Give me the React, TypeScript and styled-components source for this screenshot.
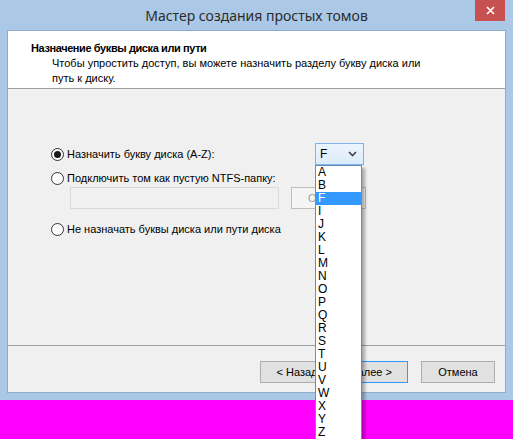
import styled, { createGlobalStyle } from "styled-components";

const GlobalStyle = createGlobalStyle`
    html, body {
        margin: 0;
        padding: 0;
        background: #ff00ff;
    }
    body {
        font-family: "Liberation Sans", Arial, sans-serif;
        font-size: 11px;
        color: #000;
    }
`;

const letters = ["A", "B", "F", "I", "J", "K", "L", "M", "N", "O", "P", "Q", "R", "S", "T", "U", "V", "W", "X", "Y", "Z"];

const Page = styled.div`
    width: 513px;
    height: 439px;
    background: #ff00ff;
`;

const Window = styled.div`
    width: 513px;
    height: 400px;
    box-sizing: border-box;
    padding: 0 7px 7px;
    background: #abc9e7;
    display: flex;
    flex-direction: column;
`;

const TitleBar = styled.div`
    height: 30px;
    display: grid;
    grid-template-columns: 1fr auto 1fr;
    align-items: center;
`;

const Title = styled.div`
    grid-column: 2;
    font-family: "Noto Sans", sans-serif;
    font-size: 14px;
    color: #2c2c2c;
    padding-top: 1px;
`;

const CloseButton = styled.div`
    grid-column: 3;
    justify-self: end;
    align-self: start;
    width: 30px;
    height: 21px;
    margin-right: 1px;
    background: #c75050;
    display: flex;
    align-items: center;
    justify-content: center;
`;

const Client = styled.div`
    flex: 1;
    border: 1px solid #8eaccd;
    background: #f0f0f0;
    display: flex;
    flex-direction: column;
`;

const Header = styled.div`
    height: 58px;
    box-sizing: border-box;
    background: #fff;
    border-bottom: 1px solid #a0a0a0;
    padding: 10px 0 0 23px;
    line-height: 15px;
`;

const HeaderTitle = styled.div`
    font-weight: bold;
    letter-spacing: -0.4px;
`;

const HeaderText = styled.div`
    margin-left: 21px;
`;

const Body = styled.div`
    flex: 1;
    display: flex;
    flex-direction: column;
`;

const Options = styled.div`
    flex: 1;
    padding: 54px 0 0 43px;
    display: flex;
    flex-direction: column;
`;

const Row = styled.div<{ $gap?: number }>`
    display: flex;
    align-items: center;
    margin-top: ${(p) => p.$gap ?? 0}px;
`;

const RadioLabel = styled.label<{ $width?: number }>`
    display: flex;
    align-items: center;
    gap: 3px;
    line-height: 14px;
    width: ${(p) => (p.$width ? `${p.$width}px` : "auto")};
`;

const RadioCircle = styled.span<{ $checked?: boolean }>`
    width: 11px;
    height: 11px;
    border: 1px solid #333;
    border-radius: 50%;
    background: #fff;
    display: flex;
    align-items: center;
    justify-content: center;
    &::after {
        content: "";
        display: ${(p) => (p.$checked ? "block" : "none")};
        width: 7px;
        height: 7px;
        border-radius: 50%;
        background: #1a1a1a;
    }
`;

const PathRow = styled.div`
    display: flex;
    gap: 12px;
    margin: 2px 0 0 19px;
`;

const TextBox = styled.div`
    width: 207px;
    height: 20px;
    border: 1px solid #d9d9d9;
    background: #f0f0f0;
`;

const DisabledButton = styled.div`
    width: 73px;
    height: 20px;
    border: 1px solid #bfbfbf;
    background: #f4f4f4;
    color: #a0a0a0;
    display: flex;
    align-items: center;
    justify-content: center;
`;

const ComboWrap = styled.div`
    position: relative;
`;

const Combo = styled.div`
    width: 37px;
    height: 20px;
    border: 1px solid #7eb4ea;
    background: linear-gradient(#ecf4fc, #dcecfc);
    display: flex;
    align-items: center;
    justify-content: space-between;
    padding: 0 6px 0 4px;
    font-size: 12px;
`;

const DropList = styled.ul`
    position: absolute;
    top: 22px;
    left: 0;
    width: 45px;
    margin: 0;
    padding: 0;
    list-style: none;
    background: #fff;
    border: 1px solid #6a8db5;
    box-shadow: 3px 3px 3px rgba(0, 0, 0, 0.3);
    z-index: 2;
`;

const DropItem = styled.li<{ $selected?: boolean }>`
    height: 13px;
    line-height: 13px;
    font-size: 12px;
    padding-left: 2px;
    background: ${(p) => (p.$selected ? "#3399ff" : "transparent")};
    color: ${(p) => (p.$selected ? "#fff" : "#000")};
`;

const Separator = styled.div`
    height: 1px;
    background: #a0a0a0;
`;

const Footer = styled.div`
    display: flex;
    justify-content: flex-end;
    padding: 15px 10px 9px;
`;

const Button = styled.div<{ $default?: boolean; $space?: number }>`
    width: 72px;
    height: 20px;
    border: 1px solid ${(p) => (p.$default ? "#3399ff" : "#adadad")};
    background: #e1e1e1;
    display: flex;
    align-items: center;
    justify-content: center;
    margin-left: ${(p) => p.$space ?? 0}px;
`;

export default function App() {
    return (
        <Page>
            <GlobalStyle />
            <Window>
                <TitleBar>
                    <Title>Мастер создания простых томов</Title>
                    <CloseButton>
                        <svg width="9" height="9" viewBox="0 0 9 9">
                            <path d="M1 1 L8 8 M8 1 L1 8" stroke="#fff" strokeWidth="1.6" />
                        </svg>
                    </CloseButton>
                </TitleBar>
                <Client>
                    <Header>
                        <HeaderTitle>Назначение буквы диска или пути</HeaderTitle>
                        <HeaderText>
                            Чтобы упростить доступ, вы можете назначить разделу букву диска или
                            <br />
                            путь к диску.
                        </HeaderText>
                    </Header>
                    <Body>
                        <Options>
                            <Row>
                                <RadioLabel $width={264}>
                                    <RadioCircle $checked />
                                    Назначить букву диска (A-Z):
                                </RadioLabel>
                                <ComboWrap>
                                    <Combo>
                                        <span>F</span>
                                        <svg width="9" height="6" viewBox="0 0 9 6">
                                            <path d="M1 1 L4.5 4.5 L8 1" fill="none" stroke="#444" strokeWidth="1.6" />
                                        </svg>
                                    </Combo>
                                    <DropList>
                                        {letters.map((l) => (
                                            <DropItem key={l} $selected={l === "F"}>
                                                {l}
                                            </DropItem>
                                        ))}
                                    </DropList>
                                </ComboWrap>
                            </Row>
                            <Row $gap={6}>
                                <RadioLabel>
                                    <RadioCircle />
                                    Подключить том как пустую NTFS-папку:
                                </RadioLabel>
                            </Row>
                            <PathRow>
                                <TextBox />
                                <DisabledButton>Обзор...</DisabledButton>
                            </PathRow>
                            <Row $gap={13}>
                                <RadioLabel>
                                    <RadioCircle />
                                    Не назначать буквы диска или пути диска
                                </RadioLabel>
                            </Row>
                        </Options>
                        <Separator />
                        <Footer>
                            <Button>&lt; Назад</Button>
                            <Button $default>Далее &gt;</Button>
                            <Button $space={13}>Отмена</Button>
                        </Footer>
                    </Body>
                </Client>
            </Window>
        </Page>
    );
}
